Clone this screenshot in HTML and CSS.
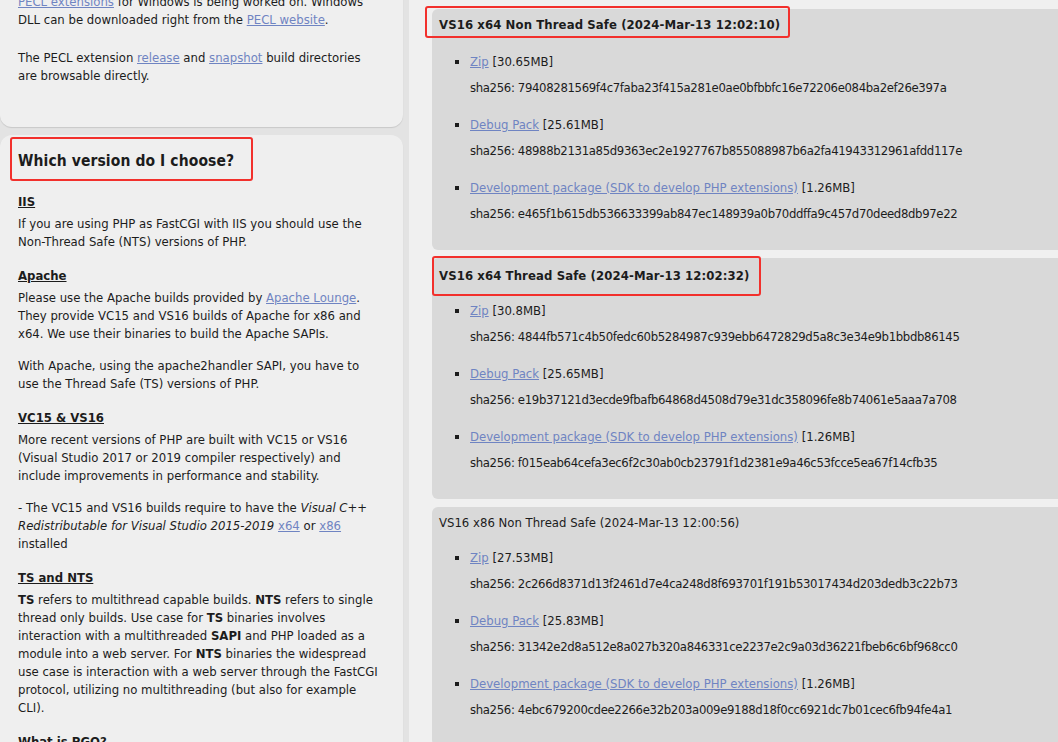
FILE: index.html
```html
<!DOCTYPE html>
<html lang="en">

<head>
    <meta charset="UTF-8">
    <meta name="viewport" content="width=device-width, initial-scale=1.0">
    <title>PHP For Windows: Binaries and sources Releases</title>
    <link rel="stylesheet" href="styles.css">
</head>

<body>
    <div class="page">
        <aside class="sidebar">
            <div class="box box-top">
                <p><a href="#">PECL extensions</a> for Windows is being worked on. Windows DLL can be downloaded right from the <a href="#">PECL website</a>.</p>
                <p>The PECL extension <a href="#">release</a> and <a href="#">snapshot</a> build directories are browsable directly.</p>
            </div>

            <div class="box">
                <h2 class="marked marked-side">Which version do I choose?</h2>

                <h3>IIS</h3>
                <p>If you are using PHP as FastCGI with IIS you should use the Non-Thread Safe (NTS) versions of PHP.</p>

                <h3>Apache</h3>
                <p>Please use the Apache builds provided by <a href="#">Apache Lounge</a>. They provide VC15 and VS16 builds of Apache for x86 and x64. We use their binaries to build the Apache SAPIs.</p>
                <p>With Apache, using the apache2handler SAPI, you have to use the Thread Safe (TS) versions of PHP.</p>

                <h3>VC15 &amp; VS16</h3>
                <p>More recent versions of PHP are built with VC15 or VS16 (Visual Studio 2017 or 2019 compiler respectively) and include improvements in performance and stability.</p>
                <p>- The VC15 and VS16 builds require to have the <i>Visual C++ Redistributable for Visual Studio 2015-2019</i> <a href="#">x64</a> or <a href="#">x86</a> installed</p>

                <h3>TS and NTS</h3>
                <p><b>TS</b> refers to multithread capable builds. <b>NTS</b> refers to single thread only builds. Use case for <b>TS</b> binaries involves interaction with a multithreaded <b>SAPI</b> and PHP loaded as a module into a web server. For <b>NTS</b> binaries the widespread use case is interaction with a web server through the FastCGI protocol, utilizing no multithreading (but also for example CLI).</p>

                <h3>What is PGO?</h3>
            </div>
        </aside>

        <main class="builds">
            <section class="build">
                <h4 class="build-title marked marked-first">VS16 x64 Non Thread Safe (2024-Mar-13 12:02:10)</h4>
                <ul class="files">
                    <li><a href="#">Zip</a> [30.65MB]<span class="sha">sha256: 79408281569f4c7faba23f415a281e0ae0bfbbfc16e72206e084ba2ef26e397a</span></li>
                    <li><a href="#">Debug Pack</a> [25.61MB]<span class="sha">sha256: 48988b2131a85d9363ec2e1927767b855088987b6a2fa41943312961afdd117e</span></li>
                    <li><a href="#">Development package (SDK to develop PHP extensions)</a> [1.26MB]<span class="sha">sha256: e465f1b615db536633399ab847ec148939a0b70ddffa9c457d70deed8db97e22</span></li>
                </ul>
            </section>

            <section class="build">
                <h4 class="build-title marked marked-second">VS16 x64 Thread Safe (2024-Mar-13 12:02:32)</h4>
                <ul class="files">
                    <li><a href="#">Zip</a> [30.8MB]<span class="sha">sha256: 4844fb571c4b50fedc60b5284987c939ebb6472829d5a8c3e34e9b1bbdb86145</span></li>
                    <li><a href="#">Debug Pack</a> [25.65MB]<span class="sha">sha256: e19b37121d3ecde9fbafb64868d4508d79e31dc358096fe8b74061e5aaa7a708</span></li>
                    <li><a href="#">Development package (SDK to develop PHP extensions)</a> [1.26MB]<span class="sha">sha256: f015eab64cefa3ec6f2c30ab0cb23791f1d2381e9a46c53fcce5ea67f14cfb35</span></li>
                </ul>
            </section>

            <section class="build">
                <h4 class="build-title">VS16 x86 Non Thread Safe (2024-Mar-13 12:00:56)</h4>
                <ul class="files">
                    <li><a href="#">Zip</a> [27.53MB]<span class="sha">sha256: 2c266d8371d13f2461d7e4ca248d8f693701f191b53017434d203dedb3c22b73</span></li>
                    <li><a href="#">Debug Pack</a> [25.83MB]<span class="sha">sha256: 31342e2d8a512e8a027b320a846331ce2237e2c9a03d36221fbeb6c6bf968cc0</span></li>
                    <li><a href="#">Development package (SDK to develop PHP extensions)</a> [1.26MB]<span class="sha">sha256: 4ebc679200cdee2266e32b203a009e9188d18f0cc6921dc7b01cec6fb94fe4a1</span></li>
                </ul>
            </section>
        </main>
    </div>
</body>

</html>
```

FILE: styles.css
```css
* {
    margin: 0;
    padding: 0;
    box-sizing: border-box;
}

html,
body {
    height: 100%;
    overflow: hidden;
}

body {
    font-family: "DejaVu Sans Condensed", "DejaVu Sans", sans-serif;
    font-stretch: condensed;
    font-size: 13px;
    line-height: 18px;
    color: #1c1c1c;
    background: #e3e3e3;
}

a {
    color: #6f84c2;
    text-decoration: underline;
}

.page {
    display: flex;
    align-items: flex-start;
    gap: 6px;
    min-height: 100%;
}

/* left column */

.sidebar {
    width: 403px;
    flex-shrink: 0;
    display: flex;
    flex-direction: column;
    gap: 8px;
}

.box {
    background: #efefef;
    border-radius: 12px;
    padding: 3px 24px 18px 18px;
    box-shadow: 0 1px 1px rgba(0, 0, 0, 0.12);
}

.box p {
    margin-bottom: 14px;
}

.box-top {
    margin-top: -10px;
    padding-bottom: 22px;
    border-radius: 0 0 12px 12px;
}

.box-top p {
    margin-bottom: 20px;
}

.box h2 {
    font-size: 15.5px;
    line-height: 20px;
    font-weight: 700;
}

.box h3 {
    font-size: 13px;
    font-weight: 700;
    text-decoration: underline;
    padding-top: 2px;
    margin-bottom: 4px;
}

/* right column */

.builds {
    flex: 1;
    align-self: stretch;
    background: #f0f0f0;
    padding: 9px 0 0 23px;
    display: flex;
    flex-direction: column;
    gap: 8px;
}

.build {
    background: #d9d9d9;
    border-radius: 6px 0 0 6px;
    padding: 7px 0 8px 7px;
}

.build-title {
    font-size: 13px;
    font-weight: 400;
}

.marked {
    border: 2px solid #f2302c;
    border-radius: 3px;
    font-weight: 700;
    letter-spacing: 0.1px;
}

.marked-side {
    width: fit-content;
    margin: -1px 0 10px -8px;
    padding: 12px 17px 8px 6px;
}

.marked-first {
    display: inline-block;
    margin: -13px 0 -2px -14px;
    padding: 8px 8px 2px 12px;
}

.marked-second {
    display: inline-block;
    margin: -9px 0 -15px -7px;
    padding: 9px 9px 9px 5px;
}

.files {
    list-style: square;
    padding-left: 31px;
    margin-top: 17px;
}

.files li {
    margin-bottom: 19px;
}

.sha {
    display: block;
    margin-top: 8px;
    letter-spacing: -0.35px;
}
```
